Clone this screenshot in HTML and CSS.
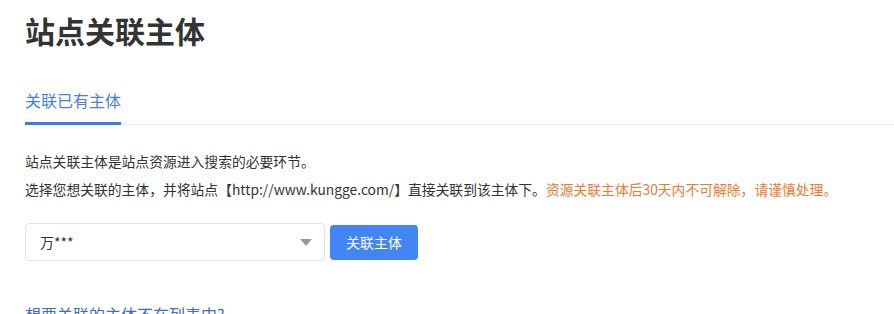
FILE: index.html
```html
<!DOCTYPE html>
<html lang="zh-CN">
<head>
  <meta charset="UTF-8" />
  <title>站点关联主体</title>
  <link rel="stylesheet" href="styles.css">
</head>
<body>
  <div class="page">
    <h1 class="title">站点关联主体</h1>

    <div class="tabs">
      <div class="tab active">关联已有主体</div>
    </div>

    <div class="desc">
      <p>站点关联主体是站点资源进入搜索的必要环节。</p>
      <p>选择您想关联的主体，并将站点【http://www.kungge.com/】直接关联到该主体下。<span class="warn">资源关联主体后30天内不可解除，请谨慎处理。</span></p>
    </div>

    <div class="bind-row">
      <div class="select">
        <span class="select-value">万***</span>
        <span class="arrow"></span>
      </div>
      <button class="bind-btn">关联主体</button>
    </div>

    <a class="help" href="#">想要关联的主体不在列表中?</a>
  </div>
</body>
</html>
```

FILE: styles.css
```css
body {
  margin: 0;
  background: #fff;
  font-family: "Noto Sans CJK SC", "Noto Sans", sans-serif;
  color: #333;
}
.page {
  padding: 14px 0 0 25px;
}
.title {
  margin: 0;
  font-size: 30px;
  line-height: 32px;
  font-weight: 700;
  color: #333;
}
.tabs {
  margin-top: 45px;
  border-bottom: 1px solid #eee;
  display: flex;
}
.tab {
  font-size: 16px;
  line-height: 18px;
  padding-bottom: 13px;
  margin-bottom: -1px;
  color: #4a80d8;
  border-bottom: 3px solid transparent;
}
.tab.active {
  border-bottom-color: #3d7fe0;
}
.desc {
  margin-top: 22px;
  font-size: 13.8px;
  line-height: 28px;
}
.desc p {
  margin: 0;
}
.warn {
  color: #ec7a33;
}
.bind-row {
  margin-top: 20px;
  display: flex;
  align-items: center;
  gap: 5px;
}
.select {
  width: 272px;
  height: 36px;
  border: 1px solid #e3e3e3;
  border-radius: 4px;
  display: flex;
  align-items: center;
  justify-content: space-between;
  padding: 0 12px 0 14px;
  font-size: 14px;
}
.arrow {
  width: 0;
  height: 0;
  border-left: 6px solid transparent;
  border-right: 6px solid transparent;
  border-top: 7px solid #999;
}
.bind-btn {
  width: 88px;
  height: 35px;
  border: none;
  border-radius: 4px;
  background: #4285f4;
  color: #fff;
  font-family: inherit;
  font-size: 14px;
  cursor: pointer;
}
.help {
  display: block;
  margin-top: 43px;
  font-size: 16px;
  line-height: 20px;
  color: #3a6fc9;
  text-decoration: none;
}
```
